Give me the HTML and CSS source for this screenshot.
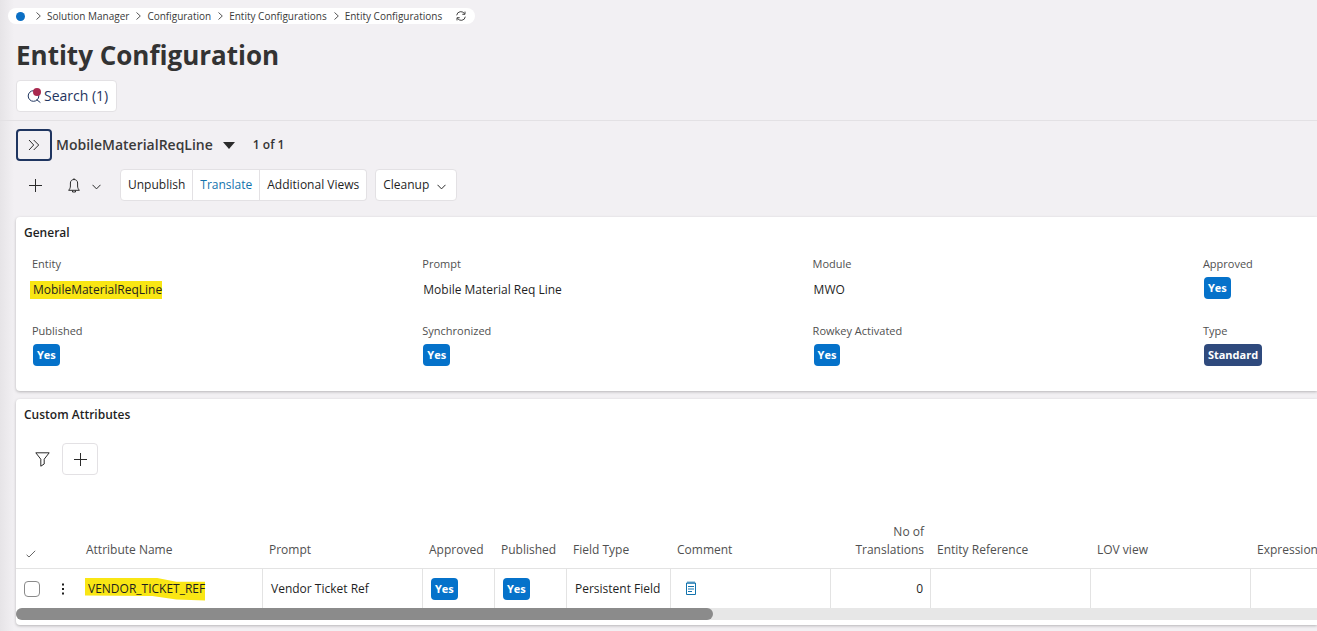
FILE: index.html
```html
<!DOCTYPE html>
<html lang="en">
<head>
    <meta charset="UTF-8">
    <meta name="viewport" content="width=device-width, initial-scale=1.0">
    <title>Entity Configuration</title>
    <link rel="stylesheet" href="styles.css">
</head>
<body>
    <header class="page-header">
        <nav class="breadcrumbs" aria-label="Breadcrumb">
            <a href="#" class="home-dot" aria-label="Home"></a>
            <svg class="crumb-arrow" viewBox="0 0 5 8"><path d="M0.5 0.5 L4.3 4 L0.5 7.5"/></svg>
            <a href="#">Solution Manager</a>
            <svg class="crumb-arrow" viewBox="0 0 5 8"><path d="M0.5 0.5 L4.3 4 L0.5 7.5"/></svg>
            <a href="#">Configuration</a>
            <svg class="crumb-arrow" viewBox="0 0 5 8"><path d="M0.5 0.5 L4.3 4 L0.5 7.5"/></svg>
            <a href="#">Entity Configurations</a>
            <svg class="crumb-arrow" viewBox="0 0 5 8"><path d="M0.5 0.5 L4.3 4 L0.5 7.5"/></svg>
            <a href="#">Entity Configurations</a>
            <button class="refresh" aria-label="Refresh">
                <svg width="10" height="10" viewBox="0 0 10 10"><path d="M0.7 4.3 A4.2 4.2 0 0 1 8.6 2.9 M9 0.6 V3.3 H6.3 M9.3 5.7 A4.2 4.2 0 0 1 1.4 7.1 M1 9.4 V6.7 H3.7"/></svg>
            </button>
        </nav>
        <h1>Entity Configuration</h1>
        <button class="btn search-btn">
            <svg width="15" height="16" viewBox="0 0 15 16">
                <circle cx="6.5" cy="8" r="5.3"/>
                <path d="M9.6 11.6 L13.4 14.6"/>
                <circle class="search-dot" cx="10" cy="4" r="4"/>
            </svg>
            Search (1)
        </button>
    </header>

    <main>
        <div class="record-bar">
            <button class="expand-btn" aria-label="Expand list">
                <svg width="12" height="12" viewBox="0 0 12 12"><path d="M1 1 L5.7 6 L1 11 M5.7 1 L10.7 6 L5.7 11"/></svg>
            </button>
            <button class="record-name">
                MobileMaterialReqLine
                <svg width="12" height="7" viewBox="0 0 12 7"><path d="M0 0 H12 L6 7 Z"/></svg>
            </button>
            <span class="record-count">1 of 1</span>
        </div>

        <div class="toolbar">
            <button class="icon-btn" aria-label="New">
                <svg width="13" height="13" viewBox="0 0 13 13"><path d="M6.5 0 V13 M0 6.5 H13"/></svg>
            </button>
            <button class="icon-btn bell-btn" aria-label="Subscriptions">
                <svg width="12" height="15" viewBox="0 0 12 15"><path d="M6 0.3 V1.5 M0.6 12.3 C1.8 11 2.4 9.8 2.4 8 V5 C2.4 2.8 4 1.5 6 1.5 C8 1.5 9.6 2.8 9.6 5 V8 C9.6 9.8 10.2 11 11.4 12.3 Z M4.5 12.5 V14 H7.5 V12.5"/></svg>
                <svg class="chevron" width="9" height="6" viewBox="0 0 9 6"><path d="M0.5 0.8 L4.5 4.9 L8.5 0.8"/></svg>
            </button>
            <div class="btn-group">
                <button class="btn">Unpublish</button>
                <button class="btn btn-link">Translate</button>
                <button class="btn">Additional Views</button>
            </div>
            <button class="btn cleanup-btn">
                Cleanup
                <svg class="chevron" width="9" height="6" viewBox="0 0 9 6"><path d="M0.5 0.8 L4.5 4.9 L8.5 0.8"/></svg>
            </button>
        </div>

        <section class="card general">
            <h2>General</h2>
            <dl class="fields">
                <div class="field">
                    <dt>Entity</dt>
                    <dd><mark>MobileMaterialReqLine</mark></dd>
                </div>
                <div class="field">
                    <dt>Prompt</dt>
                    <dd>Mobile Material Req Line</dd>
                </div>
                <div class="field">
                    <dt>Module</dt>
                    <dd>MWO</dd>
                </div>
                <div class="field">
                    <dt>Approved</dt>
                    <dd><span class="badge">Yes</span></dd>
                </div>
                <div class="field">
                    <dt>Published</dt>
                    <dd><span class="badge">Yes</span></dd>
                </div>
                <div class="field">
                    <dt>Synchronized</dt>
                    <dd><span class="badge">Yes</span></dd>
                </div>
                <div class="field">
                    <dt>Rowkey Activated</dt>
                    <dd><span class="badge">Yes</span></dd>
                </div>
                <div class="field">
                    <dt>Type</dt>
                    <dd><span class="badge badge-dark">Standard</span></dd>
                </div>
            </dl>
        </section>

        <section class="card attributes">
            <h2>Custom Attributes</h2>
            <div class="table-tools">
                <button class="icon-btn" aria-label="Filter">
                    <svg width="15" height="15" viewBox="0 0 15 15"><path d="M0.8 0.8 H14.2 L9.2 7.2 V12 L5.8 14.2 V7.2 Z"/></svg>
                </button>
                <button class="btn add-btn" aria-label="Add row">
                    <svg width="13" height="13" viewBox="0 0 13 13"><path d="M6.5 0 V13 M0 6.5 H13"/></svg>
                </button>
            </div>
            <div class="table-scroll">
                <table>
                    <colgroup>
                        <col class="col-check">
                        <col class="col-menu">
                        <col class="col-name">
                        <col class="col-wide">
                        <col class="col-flag">
                        <col class="col-flag">
                        <col class="col-type">
                        <col class="col-wide">
                        <col class="col-number">
                        <col class="col-wide">
                        <col class="col-wide">
                        <col class="col-wide">
                    </colgroup>
                    <thead>
                        <tr>
                            <th class="check-cell" aria-label="Selected"><svg width="10" height="8" viewBox="0 0 10 8"><path d="M0.6 4.8 L3 7 L9.2 0.8"/></svg></th>
                            <th aria-label="Actions"></th>
                            <th>Attribute Name</th>
                            <th>Prompt</th>
                            <th>Approved</th>
                            <th>Published</th>
                            <th>Field Type</th>
                            <th>Comment</th>
                            <th class="number">No of Translations</th>
                            <th>Entity Reference</th>
                            <th>LOV view</th>
                            <th>Expression</th>
                        </tr>
                    </thead>
                    <tbody>
                        <tr>
                            <td class="check-cell"><input type="checkbox" aria-label="Select row"></td>
                            <td class="menu-cell">
                                <button aria-label="Row menu"><svg width="4" height="12" viewBox="0 0 4 12"><path d="M1 0.5 H3 V2.5 H1 Z M1 5 H3 V7 H1 Z M1 9.5 H3 V11.5 H1 Z"/></svg></button>
                            </td>
                            <td><mark class="marker">VENDOR_TICKET_REF</mark></td>
                            <td>Vendor Ticket Ref</td>
                            <td><span class="badge">Yes</span></td>
                            <td><span class="badge">Yes</span></td>
                            <td>Persistent Field</td>
                            <td class="comment-cell">
                                <button aria-label="Comment"><svg width="12" height="15" viewBox="0 0 12 15"><path d="M1.5 2 H10.5 V13.5 H1.5 Z M3 0.4 V3 M5 0.4 V3 M7 0.4 V3 M9 0.4 V3 M3 5.5 H9 M3 8 H9 M3 10.5 H7"/></svg></button>
                            </td>
                            <td class="number">0</td>
                            <td></td>
                            <td></td>
                            <td></td>
                        </tr>
                    </tbody>
                </table>
            </div>
            <div class="scroll-track"><div class="scroll-thumb"></div></div>
        </section>
    </main>
</body>
</html>
```

FILE: styles.css
```css
* {
    box-sizing: border-box;
}

body {
    margin: 0;
    min-height: 100vh;
    background: linear-gradient(to right, #e6e4e7 0, #f2f0f3 14px);
    color: #1f1f1f;
    font-family: 'Open Sans', sans-serif;
    font-size: 12px;
    line-height: 18px;
    overflow: hidden;
}

button {
    font: inherit;
    color: inherit;
    background: none;
    border: none;
    padding: 0;
    cursor: pointer;
}

svg {
    display: block;
    flex: none;
    fill: none;
    stroke: #2b2b2b;
    stroke-width: 1;
}

/* Header */
.page-header {
    padding: 8px 16px 8px 8px;
    border-bottom: 1px solid #e3e1e4;
}

.breadcrumbs {
    display: flex;
    align-items: center;
    width: fit-content;
    height: 16px;
    padding: 0 9px 0 8px;
    border-radius: 8px;
    background-color: #ffffff;
    font-size: 10px;
    line-height: 16px;
}

.breadcrumbs a {
    padding-bottom: 1px;
    color: #3a3a3a;
    text-decoration: none;
}

.breadcrumbs .home-dot {
    width: 9px;
    height: 9px;
    margin-right: 4px;
    padding: 0;
    border-radius: 50%;
    background-color: #0b6fc4;
}

.crumb-arrow {
    width: 5px;
    height: 8px;
    margin: 0 6px 0 7px;
    stroke: #555555;
}

.refresh {
    margin-left: 14px;
}

.refresh svg {
    stroke: #444444;
}

h1 {
    margin: 13px 8px 7px;
    font-size: 26px;
    line-height: 36px;
    font-weight: 700;
    color: #333333;
}

.btn {
    display: flex;
    align-items: center;
    height: 32px;
    padding: 0 7px;
    border: 1px solid #e3e1e4;
    border-radius: 4px;
    background-color: #ffffff;
}

.search-btn {
    gap: 2px;
    margin-left: 8px;
    padding: 0 8px 0 10px;
    font-size: 14px;
    color: #1f3560;
}

.search-btn svg {
    stroke: #1f3560;
}

.search-btn .search-dot {
    fill: #a9294f;
    stroke: none;
}

/* Record selector */
main {
    padding: 8px 0 0 16px;
}

.record-bar {
    display: flex;
    align-items: center;
}

.expand-btn {
    display: grid;
    place-items: center;
    width: 36px;
    height: 32px;
    border: 2px solid #1f3560;
    border-radius: 4px;
}

.record-name {
    display: flex;
    align-items: center;
    gap: 10px;
    margin-left: 4px;
    font-size: 14px;
    font-weight: 600;
    color: #3a3a3a;
}

.record-name svg {
    fill: #2b2b2b;
    stroke: none;
}

.record-count {
    margin-left: 18px;
    font-weight: 600;
    color: #333333;
}

/* Toolbar */
.toolbar {
    display: flex;
    align-items: center;
    margin-top: 8px;
}

.icon-btn {
    display: flex;
    align-items: center;
    justify-content: center;
    width: 38px;
    height: 32px;
}

.bell-btn {
    gap: 12px;
    width: 54px;
    margin: 0 9px 0 3px;
}

.chevron {
    margin-top: 3px;
}

.btn-group {
    display: flex;
}

.btn-group .btn {
    border-radius: 0;
}

.btn-group .btn + .btn {
    border-left: none;
}

.btn-group .btn:first-child {
    border-radius: 4px 0 0 4px;
}

.btn-group .btn:last-child {
    border-radius: 0 4px 4px 0;
}

.btn-link {
    color: #1273ad;
}

.cleanup-btn {
    gap: 8px;
    margin-left: 8px;
    padding-right: 10px;
}

/* Cards */
.card {
    background-color: #ffffff;
    border-radius: 4px 0 0 4px;
    box-shadow: 0 1px 3px rgba(0, 0, 0, 0.25);
    overflow: hidden;
}

.card h2 {
    margin: 0;
    padding: 7px 8px;
    font-size: 12px;
    line-height: 18px;
    font-weight: 600;
}

.general {
    margin-top: 16px;
}

/* The fourth column runs past the window edge */
.fields {
    display: grid;
    grid-template-columns: repeat(4, 30%);
    row-gap: 16px;
    margin: 0;
    padding: 7px 0 17px;
}

.field {
    padding-left: 16px;
}

.field dt {
    font-size: 11px;
    line-height: 16px;
    color: #505050;
}

.field dd {
    display: flex;
    align-items: center;
    height: 35px;
    margin: 0 0 0 1px;
}

.field .badge {
    margin-bottom: 3px;
}

mark {
    padding: 0 0 0 3px;
    margin-left: -3px;
    background-color: #f9e614;
    color: inherit;
}

.badge {
    display: inline-block;
    height: 22px;
    padding: 0 4px;
    border-radius: 4px;
    background-color: #0572ca;
    color: #ffffff;
    font-size: 11px;
    line-height: 22px;
    font-weight: 700;
}

.badge-dark {
    background-color: #2f4a7d;
}

/* Attribute table */
.attributes {
    margin-top: 8px;
    padding-bottom: 5px;
}

.table-tools {
    display: flex;
    gap: 1px;
    margin: 12px 0 44px 7px;
}

.add-btn {
    justify-content: center;
    width: 36px;
}

.table-scroll {
    overflow: hidden;
}

table {
    width: 1394px;
    table-layout: fixed;
    border-collapse: separate;
    border-spacing: 0;
}

.col-check {
    width: 32px;
}

.col-menu {
    width: 32px;
}

.col-name {
    width: 183px;
}

.col-wide {
    width: 160px;
}

.col-flag {
    width: 72px;
}

.col-type {
    width: 104px;
}

.col-number {
    width: 100px;
}

th {
    height: 49px;
    padding: 4px 6px 9px;
    border-bottom: 1px solid #e3e3e3;
    font-weight: 400;
    text-align: left;
    vertical-align: bottom;
    color: #505050;
}

td {
    height: 39px;
    padding: 0 8px;
    border-right: 1px solid #e3e3e3;
}

td:nth-child(-n+2) {
    border-right: none;
}

th.number,
td.number {
    padding-right: 7px;
    text-align: right;
}

.check-cell {
    padding-left: 8px;
    padding-right: 0;
}

th.check-cell {
    padding-left: 10px;
    padding-bottom: 10px;
}

th.check-cell svg {
    stroke: #666666;
}

input[type="checkbox"] {
    display: block;
    appearance: none;
    width: 16px;
    height: 16px;
    margin: 0;
    border: 1px solid #8a8a8a;
    border-radius: 4px;
    background-color: #ffffff;
}

.menu-cell button {
    display: block;
    margin-left: 5px;
}

.menu-cell svg {
    fill: #1f1f1f;
    stroke: none;
}

.comment-cell {
    padding-left: 14px;
}

.comment-cell button {
    display: block;
}

.comment-cell svg {
    stroke: #1273ad;
}

/* Hand drawn highlighter stroke */
.marker {
    position: relative;
    z-index: 0;
    background: none;
}

.marker::before {
    content: "";
    position: absolute;
    inset: -2px 0 -4px;
    z-index: -1;
    background-color: #f9e614;
    clip-path: polygon(0 0, 58% 0, 76% 18%, 100% 18%, 100% 100%, 76% 96%, 56% 80%, 0 78%);
}

.scroll-track {
    height: 12px;
    border-radius: 6px 0 0 6px;
    background-color: #e7e7e7;
}

.scroll-thumb {
    width: 53.6%;
    height: 12px;
    border-radius: 6px;
    background-color: #8b8b8b;
}
```
